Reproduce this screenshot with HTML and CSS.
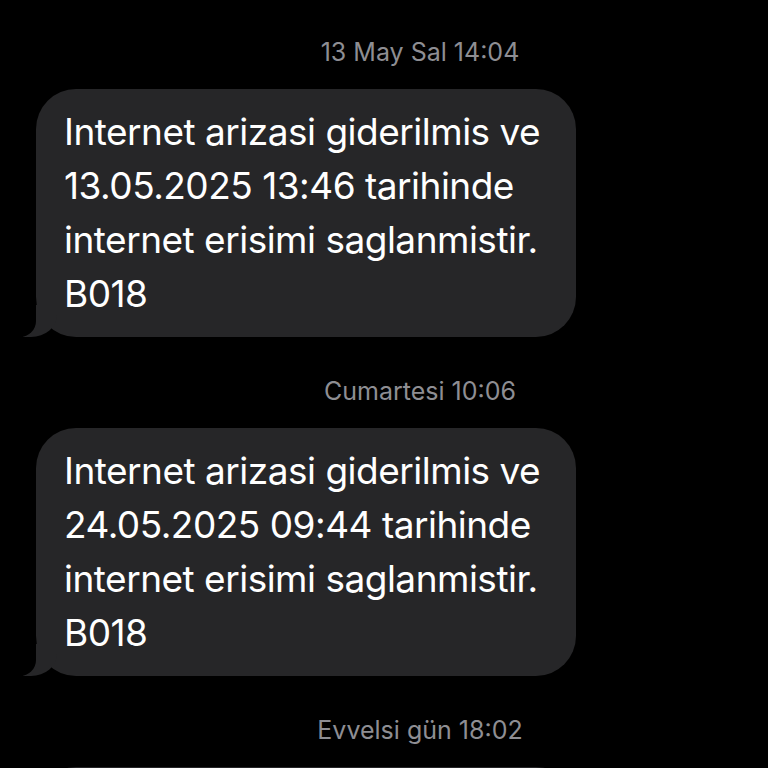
FILE: index.html
```html
<!DOCTYPE html>
<html lang="tr">
<head>
    <meta charset="UTF-8">
    <title>Mesajlar</title>
    <link rel="stylesheet" href="styles.css">
</head>
<body>

    <div class="thread">
        <!-- Mesaj 1 -->
        <div class="stamp">13 May Sal 14:04</div>
        <div class="bubble">
            Internet arizasi giderilmis ve<br>
            13.05.2025 13:46 tarihinde<br>
            internet erisimi saglanmistir.<br>
            B018
        </div>

        <!-- Mesaj 2 -->
        <div class="stamp">Cumartesi 10:06</div>
        <div class="bubble">
            Internet arizasi giderilmis ve<br>
            24.05.2025 09:44 tarihinde<br>
            internet erisimi saglanmistir.<br>
            B018
        </div>

        <!-- Mesaj 3 (only the top edge is on screen) -->
        <div class="stamp">Evvelsi gün 18:02</div>
        <div class="bubble bubble-next"></div>
    </div>

</body>
</html>
```

FILE: styles.css
```css
body {
    margin: 0;
    background-color: #000;
    font-family: Inter, "Noto Sans", sans-serif;
    color: #fff;
    overflow: hidden;
}
.thread {
    display: flex;
    flex-direction: column;
    align-items: flex-start;
    padding: 38px 0 0 36px;
}
.stamp {
    align-self: stretch;
    padding-left: 36px;
    text-align: center;
    font-size: 25px;
    line-height: 28px;
    color: #8e8e93;
    margin-bottom: 23px;
}
.bubble {
    position: relative;
    box-sizing: border-box;
    width: 540px;
    padding: 16px 20px 16px 28px;
    background-color: #262628;
    border-radius: 40px;
    font-size: 37px;
    letter-spacing: -0.5px;
    line-height: 54px;
    margin-bottom: 40px;
}
.bubble-next {
    height: 248px;
}
.bubble::before {
    content: "";
    position: absolute;
    left: -13px;
    bottom: 0;
    width: 34px;
    height: 32px;
    background-color: #262628;
    border-bottom-right-radius: 26px 22px;
}
.bubble::after {
    content: "";
    position: absolute;
    left: -40px;
    bottom: 0;
    width: 40px;
    height: 32px;
    background-color: #000;
    border-bottom-right-radius: 16px;
}
```
